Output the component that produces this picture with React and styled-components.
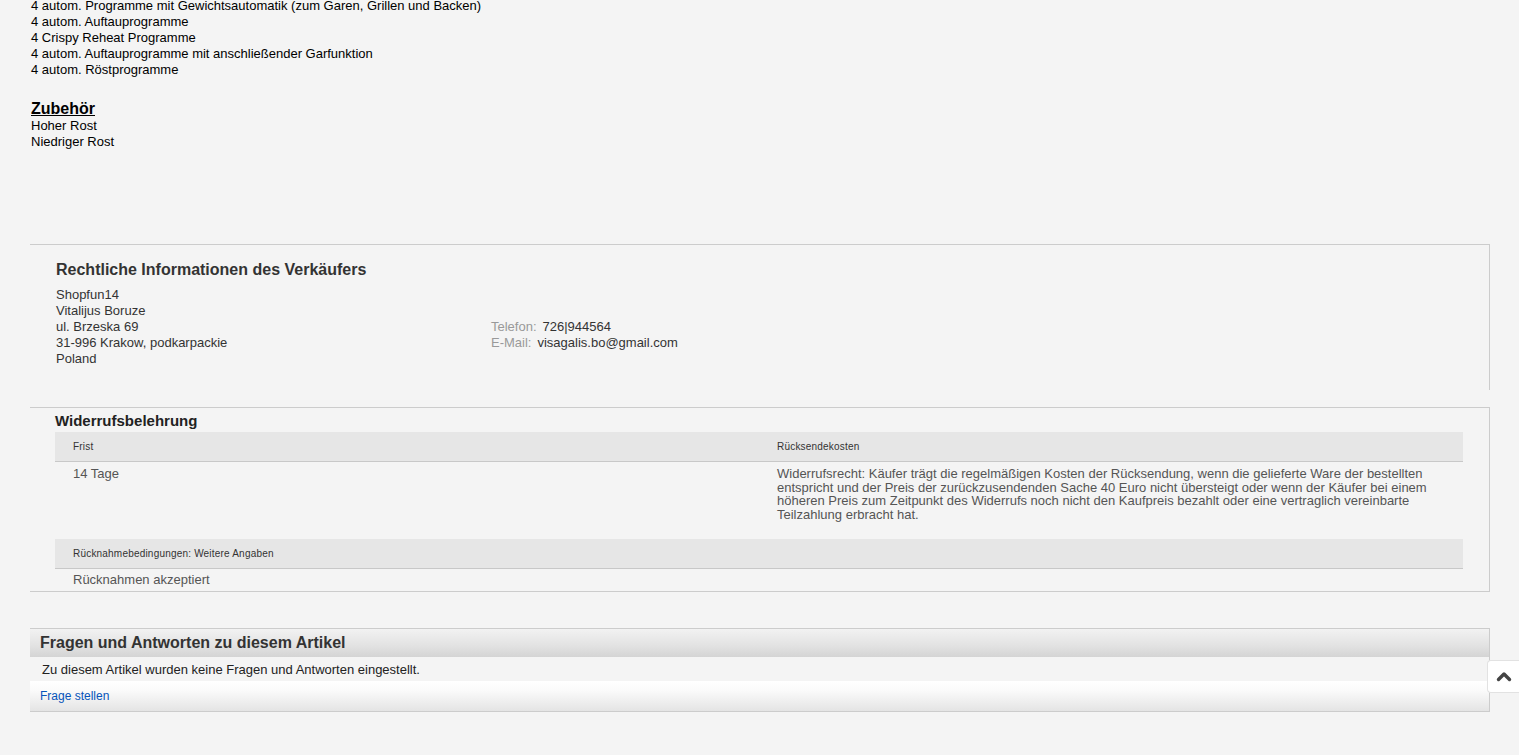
import React from 'react'
import styled, { createGlobalStyle } from 'styled-components'

const GlobalStyle = createGlobalStyle`
    body {
        margin: 0;
        background-color: #f4f4f4;
        font-family: Arial, "Liberation Sans", Helvetica, sans-serif;
        color: #000;
    }
`

const Page = styled.div`
    padding: 0 29px 0 30px;
    margin-top: -2px;
`

const Beschreibung = styled.div`
    padding-left: 1px;
    font-size: 13px;
    line-height: 16px;
`

const Zeile = styled.div``

const UnterTitel = styled.div`
    margin-top: 21px;
    font-size: 16px;
    font-weight: bold;
    text-decoration: underline;
    line-height: 19px;
`

const Box = styled.div`
    border-top: 1px solid #cccccc;
    border-right: 1px solid #cccccc;
    border-bottom: ${props => props.bottom ? '1px solid #cccccc' : '0'};
    margin-top: ${props => props.gap}px;
    padding: ${props => props.pad};
`

const RechtTitel = styled.h3`
    margin: 0 0 8px;
    font-size: 16px;
    line-height: 19px;
    color: #333;
`

const Adresse = styled.div`
    display: grid;
    grid-template-columns: 435px 1fr;
    font-size: 13px;
    line-height: 16px;
    color: #333;
`

const Kontakt = styled.div`
    padding-top: 32px;
`

const KontaktZeile = styled.div`
    display: flex;
    gap: 6px;
`

const Label = styled.span`
    color: #999;
`

const WiderrufTitel = styled.h3`
    margin: 0 0 2px;
    font-size: 15px;
    line-height: 18px;
    color: #222;
`

const Tabelle = styled.div`
    display: grid;
    grid-template-columns: 704px 1fr;
`

const KopfZelle = styled.div`
    background-color: #e6e6e6;
    border-bottom: 1px solid #c8c8c8;
    height: 29px;
    display: flex;
    align-items: center;
    padding-left: 18px;
    font-size: 10px;
    letter-spacing: 0.2px;
    color: #333;
    grid-column: ${props => props.full ? '1 / 3' : 'auto'};
`

const Zelle = styled.div`
    box-sizing: border-box;
    padding: ${props => props.pad || '5px 18px 0'};
    min-height: ${props => props.h || 0}px;
    font-size: 13px;
    line-height: 13.6px;
    color: #555;
    grid-column: ${props => props.full ? '1 / 3' : 'auto'};
`

const FaqBox = styled.div`
    margin-top: 36px;
    border-top: 1px solid #cccccc;
    border-right: 1px solid #cccccc;
    border-bottom: 1px solid #cccccc;
`

const FaqKopf = styled.div`
    height: 28px;
    padding-left: 10px;
    display: flex;
    align-items: center;
    background: linear-gradient(to bottom, #f2f2f2 0%, #e2e2e2 60%, #d4d4d4 100%);
    font-size: 16px;
    font-weight: bold;
    color: #333;
`

const FaqText = styled.div`
    height: 24px;
    padding-left: 12px;
    display: flex;
    align-items: center;
    font-size: 13px;
    color: #222;
`

const FaqFuss = styled.div`
    height: 30px;
    padding-left: 10px;
    display: flex;
    align-items: center;
    background: linear-gradient(to bottom, #ffffff 0%, #fbfbfb 30%, #e4e4e4 100%);
    font-size: 12px;
`

const Link = styled.a`
    color: #0654ba;
    text-decoration: none;
`

const NachOben = styled.div`
    position: fixed;
    right: 0;
    bottom: 62px;
    width: 31px;
    height: 31px;
    background: #fff;
    border: 1px solid #e2e2e2;
    border-right: 0;
    border-radius: 4px 0 0 4px;
    display: flex;
    align-items: center;
    justify-content: center;
`

const programme = [
    '4 autom. Programme mit Gewichtsautomatik (zum Garen, Grillen und Backen)',
    '4 autom. Auftauprogramme',
    '4 Crispy Reheat Programme',
    '4 autom. Auftauprogramme mit anschließender Garfunktion',
    '4 autom. Röstprogramme',
]

export default function App() {
    return (
        <>
            <GlobalStyle />
            <Page>
                <Beschreibung>
                    {programme.map(p => <Zeile key={p}>{p}</Zeile>)}
                    <UnterTitel>Zubehör</UnterTitel>
                    <Zeile>Hoher Rost</Zeile>
                    <Zeile>Niedriger Rost</Zeile>
                </Beschreibung>

                <Box gap={94} pad="15px 0 23px 26px">
                    <RechtTitel>Rechtliche Informationen des Verkäufers</RechtTitel>
                    <Adresse>
                        <div>
                            <div>Shopfun14</div>
                            <div>Vitalijus Boruze</div>
                            <div>ul. Brzeska 69</div>
                            <div>31-996 Krakow, podkarpackie</div>
                            <div>Poland</div>
                        </div>
                        <Kontakt>
                            <KontaktZeile><Label>Telefon:</Label><span>726|944564</span></KontaktZeile>
                            <KontaktZeile><Label>E-Mail:</Label><span>visagalis.bo@gmail.com</span></KontaktZeile>
                        </Kontakt>
                    </Adresse>
                </Box>

                <Box gap={17} bottom pad="4px 26px 0 25px">
                    <WiderrufTitel>Widerrufsbelehrung</WiderrufTitel>
                    <Tabelle>
                        <KopfZelle>Frist</KopfZelle>
                        <KopfZelle>Rücksendekosten</KopfZelle>
                        <Zelle h={77}>14 Tage</Zelle>
                        <Zelle h={77}>
                            Widerrufsrecht: Käufer trägt die regelmäßigen Kosten der Rücksendung, wenn die gelieferte Ware der bestellten entspricht und der Preis der zurückzusendenden Sache 40 Euro nicht übersteigt oder wenn der Käufer bei einem höheren Preis zum Zeitpunkt des Widerrufs noch nicht den Kaufpreis bezahlt oder eine vertraglich vereinbarte Teilzahlung erbracht hat.
                        </Zelle>
                        <KopfZelle full>Rücknahmebedingungen: Weitere Angaben</KopfZelle>
                        <Zelle full h={22} pad="4px 18px 0">Rücknahmen akzeptiert</Zelle>
                    </Tabelle>
                </Box>

                <FaqBox>
                    <FaqKopf>Fragen und Antworten zu diesem Artikel</FaqKopf>
                    <FaqText>Zu diesem Artikel wurden keine Fragen und Antworten eingestellt.</FaqText>
                    <FaqFuss><Link href="#">Frage stellen</Link></FaqFuss>
                </FaqBox>
            </Page>
            <NachOben>
                <svg width="16" height="11" viewBox="0 0 16 11">
                    <polyline points="2.5,8.5 8,3 13.5,8.5" fill="none" stroke="#444" strokeWidth="3.4" strokeLinecap="round" strokeLinejoin="round" />
                </svg>
            </NachOben>
        </>
    )
}
